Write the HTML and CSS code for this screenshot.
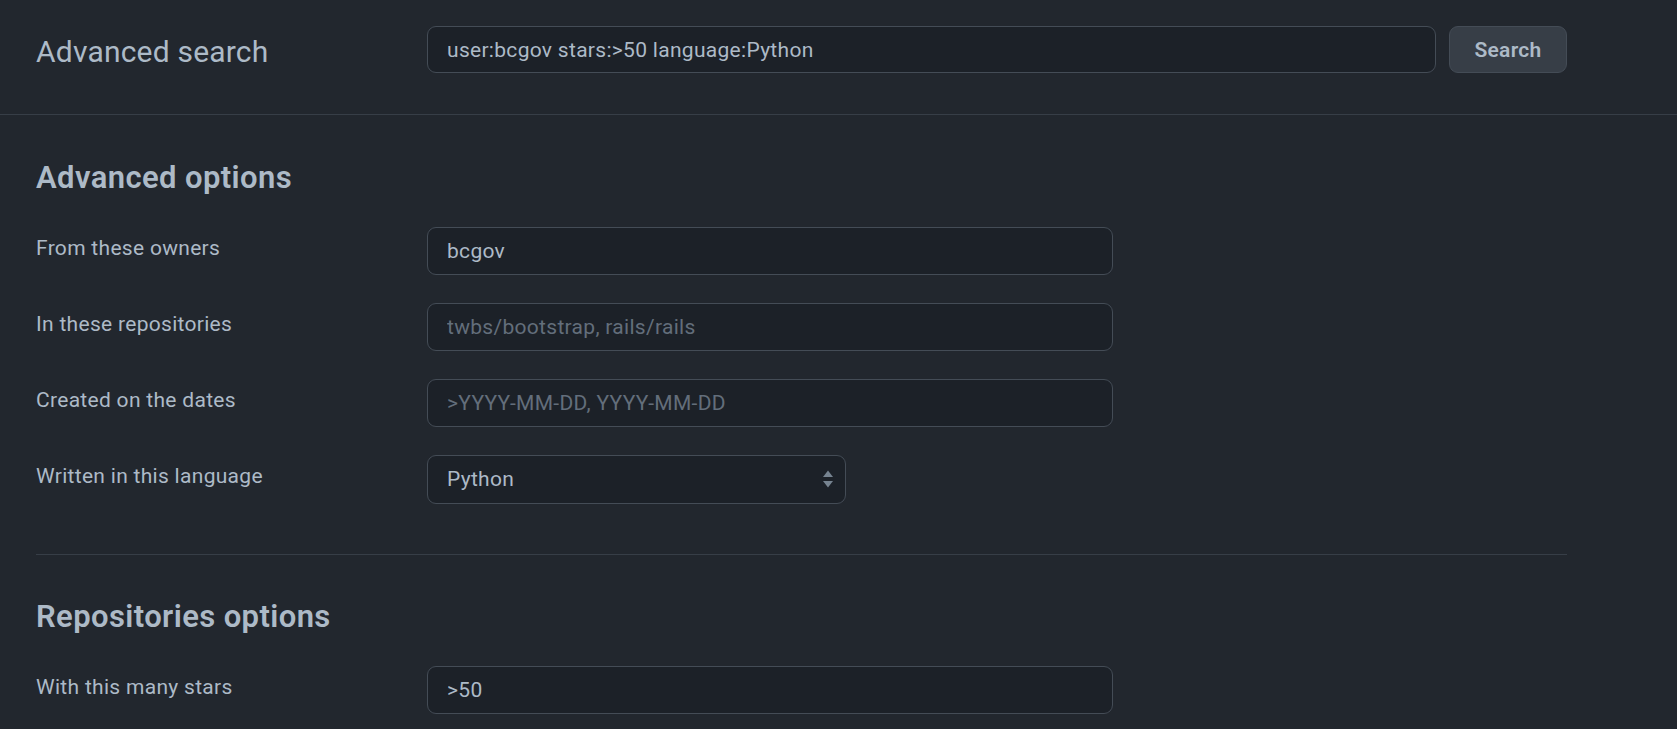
FILE: index.html
```html
<!DOCTYPE html>
<html lang="en">
<head>
<meta charset="utf-8">
<title>Advanced search</title>
<link rel="stylesheet" href="styles.css">
</head>
<body>
<header class="topbar">
  <div class="container topbar-inner">
    <h1 class="page-title">Advanced search</h1>
    <div class="search-group">
      <input class="form-control search-input" type="text" value="user:bcgov stars:&gt;50 language:Python">
      <button class="btn" type="button">Search</button>
    </div>
  </div>
</header>
<main class="container">
  <section class="options">
    <h2 class="section-title">Advanced options</h2>
    <div class="form-row">
      <label class="form-label">From these owners</label>
      <input class="form-control field" type="text" value="bcgov">
    </div>
    <div class="form-row">
      <label class="form-label">In these repositories</label>
      <input class="form-control field" type="text" placeholder="twbs/bootstrap, rails/rails">
    </div>
    <div class="form-row">
      <label class="form-label">Created on the dates</label>
      <input class="form-control field" type="text" placeholder="&gt;YYYY-MM-DD, YYYY-MM-DD">
    </div>
    <div class="form-row">
      <label class="form-label">Written in this language</label>
      <div class="select-wrap">
        <select class="form-control select">
          <option>Python</option>
        </select>
        <svg class="select-arrow" width="12" height="20" viewBox="0 0 12 20" aria-hidden="true">
          <path d="M6 1.5 L11 8 H1 Z" fill="#768390"/>
          <path d="M6 18.5 L11 12 H1 Z" fill="#768390"/>
        </svg>
      </div>
    </div>
  </section>
  <hr class="divider">
  <section class="options options-2">
    <h2 class="section-title">Repositories options</h2>
    <div class="form-row">
      <label class="form-label">With this many stars</label>
      <input class="form-control field" type="text" value="&gt;50">
    </div>
  </section>
</main>
</body>
</html>
```
FILE: styles.css
```css
* { box-sizing: border-box; }
html, body {
  margin: 0;
  background: #22272e;
  color: #adbac7;
  font-family: Roboto, "Noto Sans", "Liberation Sans", sans-serif;
  font-size: 21px;
  line-height: 1.5;
  letter-spacing: 0.3px;
}
.container {
  width: 1567px;
  padding-left: 36px;
}
.topbar {
  border-bottom: 1px solid #373e47;
}
.topbar-inner {
  display: flex;
  align-items: center;
  padding-top: 26px;
  padding-bottom: 41px;
}
.page-title {
  margin: 0;
  width: 391px;
  padding-top: 4px;
  font-size: 30px;
  font-weight: 400;
  line-height: 1.25;
  letter-spacing: 0.2px;
}
.search-group {
  flex: 1;
  display: flex;
  gap: 13px;
}
.form-control {
  height: 47px;
  background: #1c2128;
  border: 1px solid #444c56;
  border-radius: 9px;
  color: #adbac7;
  font-family: inherit;
  font-size: 21px;
  letter-spacing: 0.3px;
  padding: 0 19px;
  outline: none;
}
.form-control::placeholder { color: #636e7b; opacity: 1; }
.search-input { flex: 1; }
.btn {
  width: 118px;
  height: 47px;
  background: #373e47;
  border: 1px solid #444c56;
  border-radius: 9px;
  color: #adbac7;
  font-family: inherit;
  font-size: 21px;
  font-weight: 600;
  letter-spacing: 0.3px;
}
.options {
  padding-top: 44px;
}
.options-2 {
  padding-top: 43px;
}
.section-title {
  margin: 0 0 29px;
  font-size: 31px;
  font-weight: 600;
  line-height: 1.25;
  letter-spacing: 0.4px;
}
.form-row {
  display: flex;
  align-items: flex-start;
  margin-bottom: 28px;
}
.form-row:last-child { margin-bottom: 0; }
.form-label {
  width: 391px;
  padding-top: 6px;
}
.field {
  width: 686px;
  height: 48px;
}
.select-wrap {
  position: relative;
  width: 419px;
}
.select {
  width: 100%;
  height: 49px;
  appearance: none;
  -webkit-appearance: none;
}
.select-arrow {
  position: absolute;
  right: 12px;
  top: 14px;
}
.divider {
  margin: 50px 0 0;
  border: 0;
  border-top: 1px solid #373e47;
}
```
